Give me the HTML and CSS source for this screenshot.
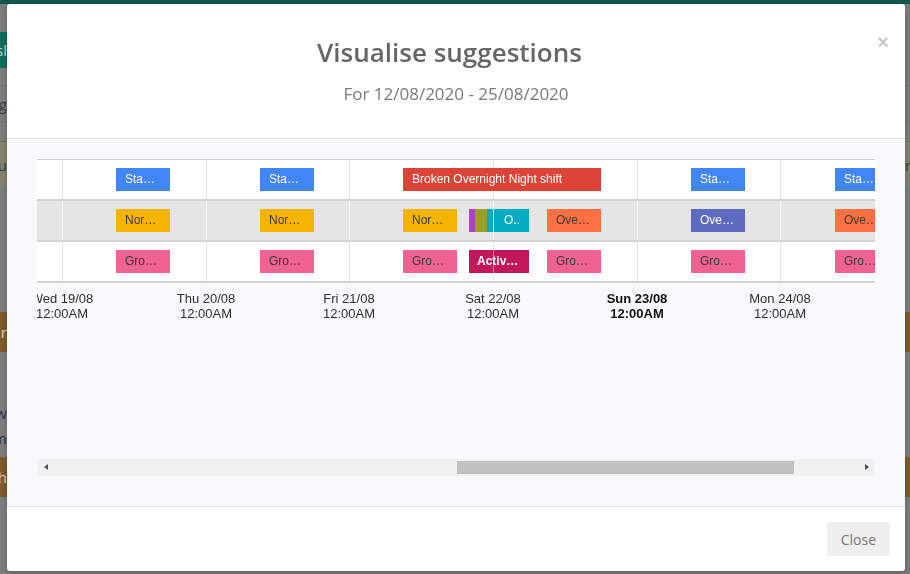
FILE: index.html
```html
<!DOCTYPE html>
<html lang="en">
<head>
<meta charset="utf-8">
<title>Visualise suggestions</title>
<link rel="stylesheet" href="styles.css">
</head>
<body>
<div class="page">
  <div class="nav"></div>
  <div class="gap g28"></div>
  <div class="band toolbar"><span class="edge-l gbtn">sl</span></div>
  <div class="gap g18 lined"></div>
  <div class="band txt"><span class="edge-l">g</span></div>
  <div class="gap g20 lined"></div>
  <div class="band olive"><span class="edge-l">ou</span><span class="edge-r">r</span></div>
  <div class="gap g125"></div>
  <div class="band brown"><span class="edge-l">r</span></div>
  <div class="gap g48"></div>
  <div class="band small"><span class="edge-l dark">ow</span></div>
  <div class="band small"><span class="edge-l dark">m</span></div>
  <div class="band brown b2"><span class="edge-l">h</span></div>
</div>

<div class="modal">
  <div class="m-header">
    <span class="x">&times;</span>
    <h1 class="m-title">Visualise suggestions</h1>
    <p class="m-sub">For 12/08/2020 - 25/08/2020</p>
  </div>

  <div class="m-body">
    <div class="timeline">
      <div class="rows">
        <div class="row">
          <span class="vl" style="left:25px"></span>
          <span class="vl" style="left:169px"></span>
          <span class="vl" style="left:312px"></span>
          <span class="vl" style="left:456px"></span>
          <span class="vl" style="left:600px"></span>
          <span class="vl" style="left:743px"></span>
          <span class="item blue" style="left:79px;width:54px">Sta…</span>
          <span class="item blue" style="left:223px;width:54px">Sta…</span>
          <span class="item red" style="left:366px;width:198px">Broken Overnight Night shift</span>
          <span class="item blue" style="left:654px;width:54px">Sta…</span>
          <span class="item blue" style="left:798px;width:54px">Sta…</span>
        </div>
        <div class="row alt">
          <span class="vl" style="left:25px"></span>
          <span class="vl" style="left:169px"></span>
          <span class="vl" style="left:312px"></span>
          <span class="vl" style="left:600px"></span>
          <span class="vl" style="left:743px"></span>
          <span class="item yellow" style="left:79px;width:54px">Nor…</span>
          <span class="item yellow" style="left:223px;width:54px">Nor…</span>
          <span class="item yellow" style="left:366px;width:54px">Nor…</span>
          <span class="item purple" style="left:432px;width:6px"></span>
          <span class="item olive" style="left:438px;width:12px"></span>
          <span class="item teal" style="left:450px;width:6px"></span>
          <span class="vl" style="left:456px"></span>
          <span class="item teal" style="left:457px;width:35px">O..</span>
          <span class="item orange" style="left:510px;width:54px">Ove…</span>
          <span class="item indigo" style="left:654px;width:54px">Ove…</span>
          <span class="item orange" style="left:798px;width:54px">Ove…</span>
        </div>
        <div class="row">
          <span class="vl" style="left:25px"></span>
          <span class="vl" style="left:169px"></span>
          <span class="vl" style="left:312px"></span>
          <span class="vl" style="left:600px"></span>
          <span class="vl" style="left:743px"></span>
          <span class="item pink" style="left:79px;width:54px">Gro…</span>
          <span class="item pink" style="left:223px;width:54px">Gro…</span>
          <span class="item pink" style="left:366px;width:54px">Gro…</span>
          <span class="item magenta" style="left:432px;width:60px">Activ…</span>
          <span class="vl over" style="left:456px"></span>
          <span class="item pink" style="left:510px;width:54px">Gro…</span>
          <span class="item pink" style="left:654px;width:54px">Gro…</span>
          <span class="item pink" style="left:798px;width:54px">Gro…</span>
        </div>
      </div>

      <div class="axis">
        <div class="tick" style="left:25px">Wed 19/08<br>12:00AM</div>
        <div class="tick" style="left:169px">Thu 20/08<br>12:00AM</div>
        <div class="tick" style="left:312px">Fri 21/08<br>12:00AM</div>
        <div class="tick" style="left:456px">Sat 22/08<br>12:00AM</div>
        <div class="tick today" style="left:600px">Sun 23/08<br>12:00AM</div>
        <div class="tick" style="left:743px">Mon 24/08<br>12:00AM</div>
      </div>

      <div class="hscroll">
        <span class="arrow arrow-l"></span>
        <span class="thumb"></span>
        <span class="arrow arrow-r"></span>
      </div>
    </div>
  </div>

  <div class="m-footer">
    <button class="btn-close" type="button">Close</button>
  </div>
</div>
</body>
</html>
```

FILE: styles.css
```css
html, body {
  margin: 0;
  padding: 0;
}

body {
  width: 910px;
  height: 574px;
  overflow: hidden;
  background: #7e7e7e;
  font-family: "Open Sans", "Liberation Sans", Arial, sans-serif;
}

/* ---------- dimmed page behind the modal ---------- */
.page {
  display: flex;
  flex-direction: column;
  height: 574px;
  background: #7e7e7e;
}

.nav {
  height: 4px;
  background: #0e5b4a;
  flex: none;
}

.gap { flex: none; }
.g28 { height: 28px; }
.g18 { height: 18px; }
.g20 { height: 20px; }
.g125 { height: 125px; }
.g48 { height: 48px; }

.lined {
  border-bottom: 1px solid #747474;
  box-sizing: border-box;
}

.band {
  flex: none;
  display: flex;
  justify-content: space-between;
  align-items: center;
  font-size: 15px;
  color: #d6d6d6;
}

.toolbar { height: 36px; }
.txt { height: 35px; border-bottom: 1px solid #747474; }
.olive { height: 45px; background: #86846f; color: #3e3e3e; }
.brown { height: 40px; background: #7f5c2e; }
.b2 { margin-top: 7px; }
.small { height: 25px; }

.edge-l {
  width: 7px;
  overflow: hidden;
  white-space: nowrap;
  direction: rtl;
  text-align: left;
  height: 100%;
  display: flex;
  align-items: center;
}

.edge-r {
  width: 5px;
  overflow: hidden;
  white-space: nowrap;
  height: 100%;
  display: flex;
  align-items: center;
}

.gbtn {
  background: #11705d;
  color: #cfd8d5;
}

.txt .edge-l { color: #3c3c3c; }
.dark { color: #2b3445; }

/* ---------- modal ---------- */
.modal {
  position: fixed;
  top: 4px;
  left: 7px;
  width: 898px;
  background: #fff;
  border-radius: 3px;
  box-shadow: 0 2px 6px rgba(0, 0, 0, 0.25);
  overflow: hidden;
}

.m-header {
  position: relative;
  height: 135px;
  box-sizing: border-box;
  padding-top: 34px;
  text-align: center;
  border-bottom: 1px solid #e5e5e5;
}

.m-title {
  margin: 0;
  padding-right: 13px;
  font-size: 26px;
  line-height: 28px;
  font-weight: 600;
  color: #666;
}

.m-sub {
  margin: 16px 0 0;
  font-size: 17px;
  line-height: 24px;
  font-weight: 400;
  color: #7a7a7a;
}

.x {
  position: absolute;
  top: 28px;
  right: 16px;
  font-family: "Liberation Sans", Arial, sans-serif;
  font-size: 20px;
  line-height: 20px;
  font-weight: 700;
  color: #c9c9c9;
}

.m-body {
  background: #f8f9fb;
  padding: 20px 30px 30px;
  border-bottom: 1px solid #e3e3e3;
}

.timeline {
  width: 838px;
  overflow: hidden;
  font-family: "Liberation Sans", Arial, sans-serif;
}

.rows {
  border-top: 1px solid #cfcfcf;
}

.row {
  position: relative;
  height: 39px;
  background: #fff;
  border-bottom: 2px solid #d3d3d3;
}

.row.alt {
  background: #e5e5e5;
}

.vl {
  position: absolute;
  top: 0;
  bottom: 0;
  width: 1px;
  background: #e3e3e3;
}

.alt .vl {
  background: #f6f6f6;
}

.vl.over {
  background: rgba(220, 220, 220, 0.6);
}

.item {
  position: absolute;
  top: 8px;
  height: 23px;
  line-height: 23px;
  box-sizing: border-box;
  padding-left: 9px;
  font-size: 12px;
  white-space: nowrap;
  overflow: hidden;
  color: #fff;
}

.blue { background: #4285f4; }
.red { background: #db4437; }
.yellow { background: #f4b400; color: #3a3a3a; }
.pink { background: #f06292; color: #3a3a3a; }
.orange { background: #ff7043; color: #3a3a3a; }
.indigo { background: #5c6bc0; }
.teal { background: #00acc1; padding-left: 10px; }
.purple { background: #ab47bc; padding: 0; }
.item.olive { background: #9e9d24; padding: 0; }
.magenta { background: #c2185b; font-weight: 700; padding-left: 8px; }

.axis {
  position: relative;
  height: 176px;
}

.tick {
  position: absolute;
  top: 8px;
  transform: translateX(-50%);
  font-size: 13px;
  line-height: 15px;
  text-align: center;
  white-space: nowrap;
  color: #2e2e2e;
}

.tick.today {
  font-weight: 700;
  color: #111;
}

.hscroll {
  position: relative;
  height: 17px;
  background: #f1f1f1;
}

.thumb {
  position: absolute;
  left: 420px;
  top: 2px;
  width: 337px;
  height: 13px;
  background: #c1c1c1;
}

.arrow {
  position: absolute;
  top: 5px;
  width: 0;
  height: 0;
  border-top: 3.5px solid transparent;
  border-bottom: 3.5px solid transparent;
}

.arrow-l {
  left: 7px;
  border-right: 4px solid #505050;
}

.arrow-r {
  left: 828px;
  border-left: 4px solid #505050;
}

.m-footer {
  display: flex;
  justify-content: flex-end;
  padding: 15px;
}

.btn-close {
  height: 34px;
  padding: 0 14px;
  border: 0;
  border-radius: 3px;
  background: #efefef;
  color: #777;
  font-family: "Open Sans", Arial, sans-serif;
  font-size: 14px;
}
```
